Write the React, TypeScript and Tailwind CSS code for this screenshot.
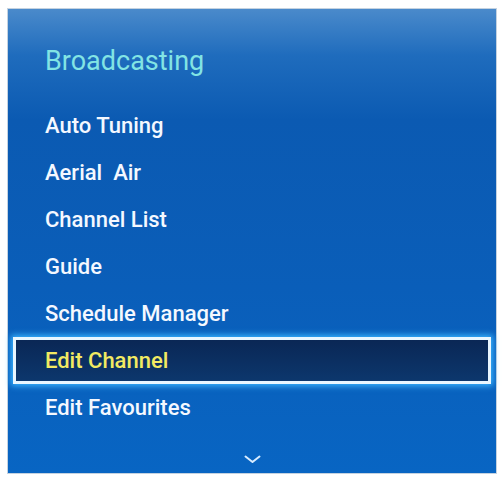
import React from "react";

const items = [
  "Auto Tuning",
  "Aerial  Air",
  "Channel List",
  "Guide",
  "Schedule Manager",
  "Edit Channel",
  "Edit Favourites",
];

export default function App() {
  const selected = 5;

  return (
    <div className="w-[504px] h-[478px] bg-white pt-[8px] pl-[7px] font-['Roboto','Liberation_Sans',sans-serif]">
      <div className="w-[490px] h-[466px] border border-[#c4d2e0] bg-[linear-gradient(to_bottom,#4a8acb_0%,#1f6cbd_10%,#0b5ab2_24%,#0a5eb9_60%,#0865c3_100%)] flex flex-col">
        {/* Title */}
        <div className="pt-[37px] pl-[37px] h-[93px] text-[27px] leading-[30px] text-[#82e4e4]">
          Broadcasting
        </div>

        {/* Menu */}
        <div className="px-[5px] flex flex-col">
          {items.map((item, i) =>
            i === selected ? (
              <div
                key={item}
                className="h-[47px] flex items-center pl-[29px] border-[3px] border-[#e8f6ff] bg-[linear-gradient(to_bottom,#0a2755,#0c376d)] shadow-[0_0_6px_2px_#3ab4ff] text-[22px] font-medium text-[#f2ea62]"
              >
                {item}
              </div>
            ) : (
              <div
                key={item}
                className="h-[47px] flex items-center pl-[32px] text-[22px] font-medium text-[#f4f8ff] whitespace-pre"
              >
                {item}
              </div>
            )
          )}
        </div>

        {/* Scroll indicator */}
        <div className="flex justify-center pt-[24px]">
          <svg width="17" height="9" viewBox="0 0 17 9" fill="none">
            <polyline
              points="1.5,1.5 8.5,7 15.5,1.5"
              stroke="#d8ecff"
              strokeWidth="2"
              strokeLinecap="round"
              strokeLinejoin="round"
            />
          </svg>
        </div>
      </div>
    </div>
  );
}
